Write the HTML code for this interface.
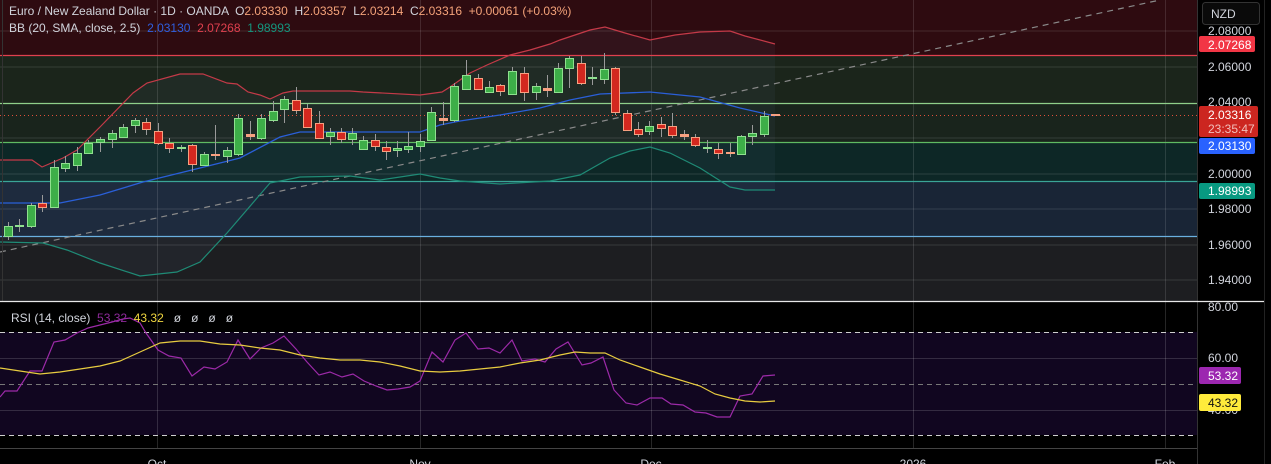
<!DOCTYPE html>
<html><head><meta charset="utf-8"><style>
html,body{margin:0;padding:0;background:#000;width:1271px;height:464px;overflow:hidden;font-family:"Liberation Sans",sans-serif}
svg{display:block}
text{font-family:"Liberation Sans",sans-serif;white-space:pre}
</style></head><body>
<svg width="1271" height="464" viewBox="0 0 1271 464" xmlns="http://www.w3.org/2000/svg" xml:space="preserve">
<rect x="0" y="0" width="1197" height="55" fill="#2e0b10"/>
<rect x="0" y="55" width="1197" height="48" fill="#1b251b"/>
<rect x="0" y="103" width="1197" height="39" fill="#19241c"/>
<rect x="0" y="142" width="1197" height="39" fill="#0d2726"/>
<rect x="0" y="181" width="1197" height="55" fill="#192536"/>
<rect x="0" y="236" width="1197" height="66" fill="#1d1e21"/>
<polygon fill="rgba(120,160,200,0.06)" points="0,160 32,160 42,167 63,158 77,150 100,127 133,93 147,83 180,74 203,74 227,83 237,84 248,92 260,95 270,99 283,93 293,91 350,91 363,92 420,95 442,92 450,87 470,73 487,65 510,55 530,50 550,44 560,40 575,35 590,30 605,27 625,33 650,40 675,35 700,32 730,31 745,36 775,44 775,190 745,190 730,187 700,168 670,153 650,147 630,151 610,158 580,175 550,181 500,184 460,181 440,178 420,174 380,180 350,176 300,177 270,183 227,233 200,262 177,272 140,276 100,263 67,250 43,243 0,242"/>
<g stroke="#ffffff" stroke-opacity="0.12" stroke-width="1">
<line x1="0" y1="31" x2="1197" y2="31"/><line x1="0" y1="67" x2="1197" y2="67"/>
<line x1="0" y1="138" x2="1197" y2="138"/><line x1="0" y1="174" x2="1197" y2="174"/>
<line x1="0" y1="209" x2="1197" y2="209"/><line x1="0" y1="245" x2="1197" y2="245"/>
<line x1="0" y1="280" x2="1197" y2="280"/>
<line x1="157.5" y1="0" x2="157.5" y2="448"/><line x1="420.5" y1="0" x2="420.5" y2="448"/>
<line x1="651.5" y1="0" x2="651.5" y2="448"/><line x1="913.5" y1="0" x2="913.5" y2="448"/>
<line x1="1165.5" y1="0" x2="1165.5" y2="448"/>
</g>
<line x1="0" y1="55.5" x2="1197" y2="55.5" stroke="#e0404e" stroke-width="1.3"/>
<line x1="0" y1="103.5" x2="1197" y2="103.5" stroke="#8fcf8a" stroke-width="1.3"/>
<line x1="0" y1="142.5" x2="1197" y2="142.5" stroke="#5fba62" stroke-width="1.3"/>
<line x1="0" y1="181.5" x2="1197" y2="181.5" stroke="#3aa597" stroke-width="1.3"/>
<line x1="0" y1="236.5" x2="1197" y2="236.5" stroke="#6ab0e0" stroke-width="1.3"/>
<line x1="0" y1="115.5" x2="1197" y2="115.5" stroke="#e0503a" stroke-width="1" stroke-dasharray="1 3"/>
<line x1="0" y1="252" x2="1160" y2="0" stroke="#8a8a8a" stroke-width="1.2" stroke-dasharray="6 5"/>
<polyline fill="none" stroke="#c43a48" stroke-width="1.2" points="0,160 32,160 42,167 63,158 77,150 100,127 133,93 147,83 180,74 203,74 227,83 237,84 248,92 260,95 270,99 283,93 293,91 350,91 363,92 420,95 442,92 450,87 470,73 487,65 510,55 530,50 550,44 560,40 575,35 590,30 605,27 625,33 650,40 675,35 700,32 730,31 745,36 775,44"/>
<polyline fill="none" stroke="#2a5fd8" stroke-width="1.3" points="0,203 60,203 100,195 143,182 200,168 240,158 280,137 300,132 330,132 420,132 440,125 460,121 500,115 540,108 570,100 600,94 650,92 700,97 740,108 775,116"/>
<polyline fill="none" stroke="#1f8b76" stroke-width="1.2" points="0,242 43,243 67,250 100,263 140,276 177,272 200,262 227,233 270,183 300,177 350,176 380,180 420,174 440,178 460,181 500,184 550,181 580,175 610,158 630,151 650,147 670,153 700,168 730,187 745,190 775,190"/>
<g stroke-width="1">
<g stroke="#9a9a9a">
<line x1="8.5" y1="222" x2="8.5" y2="240"/><line x1="19.5" y1="219" x2="19.5" y2="232"/><line x1="31.5" y1="203" x2="31.5" y2="228"/><line x1="42.5" y1="195" x2="42.5" y2="212"/><line x1="54.5" y1="160" x2="54.5" y2="207"/><line x1="65.5" y1="156" x2="65.5" y2="172"/><line x1="77.5" y1="147" x2="77.5" y2="171"/><line x1="88.5" y1="140" x2="88.5" y2="154"/><line x1="100.5" y1="137" x2="100.5" y2="152"/><line x1="112.5" y1="130" x2="112.5" y2="148"/><line x1="123.5" y1="124" x2="123.5" y2="138"/><line x1="135.5" y1="118" x2="135.5" y2="133"/><line x1="146.5" y1="118" x2="146.5" y2="135"/><line x1="158.5" y1="123" x2="158.5" y2="145"/><line x1="169.5" y1="138" x2="169.5" y2="153"/><line x1="181.5" y1="145" x2="181.5" y2="152"/><line x1="192.5" y1="144" x2="192.5" y2="172"/><line x1="204.5" y1="152" x2="204.5" y2="166"/><line x1="215.5" y1="125" x2="215.5" y2="160"/><line x1="227.5" y1="147" x2="227.5" y2="163"/><line x1="238.5" y1="114" x2="238.5" y2="156"/><line x1="250.5" y1="121" x2="250.5" y2="140"/><line x1="261.5" y1="114" x2="261.5" y2="140"/><line x1="273.5" y1="101" x2="273.5" y2="122"/><line x1="284.5" y1="96" x2="284.5" y2="123"/><line x1="296.5" y1="87" x2="296.5" y2="114"/><line x1="307.5" y1="104" x2="307.5" y2="128"/><line x1="319.5" y1="111" x2="319.5" y2="139"/><line x1="330.5" y1="128" x2="330.5" y2="145"/><line x1="341.5" y1="128" x2="341.5" y2="143"/><line x1="352.5" y1="128" x2="352.5" y2="145"/><line x1="363.5" y1="136" x2="363.5" y2="150"/><line x1="375.5" y1="134" x2="375.5" y2="151"/><line x1="386.5" y1="141" x2="386.5" y2="160"/><line x1="397.5" y1="141" x2="397.5" y2="157"/><line x1="408.5" y1="132" x2="408.5" y2="153"/><line x1="420.5" y1="134" x2="420.5" y2="152"/><line x1="431.5" y1="107" x2="431.5" y2="141"/><line x1="443.5" y1="102" x2="443.5" y2="125"/><line x1="454.5" y1="83" x2="454.5" y2="122"/><line x1="466.5" y1="60" x2="466.5" y2="89"/><line x1="478.5" y1="74" x2="478.5" y2="90"/><line x1="489.5" y1="81" x2="489.5" y2="93"/><line x1="500.5" y1="84" x2="500.5" y2="96"/><line x1="512.5" y1="67" x2="512.5" y2="95"/><line x1="524.5" y1="67" x2="524.5" y2="101"/><line x1="536.5" y1="83" x2="536.5" y2="100"/><line x1="547.5" y1="75" x2="547.5" y2="97"/><line x1="558.5" y1="63" x2="558.5" y2="93"/><line x1="569.5" y1="56" x2="569.5" y2="88"/><line x1="581.5" y1="56" x2="581.5" y2="85"/><line x1="592.5" y1="67" x2="592.5" y2="85"/><line x1="604.5" y1="53" x2="604.5" y2="84"/><line x1="615.5" y1="67" x2="615.5" y2="115"/><line x1="627.5" y1="110" x2="627.5" y2="131"/><line x1="638.5" y1="122" x2="638.5" y2="137"/><line x1="649.5" y1="121" x2="649.5" y2="135"/><line x1="661.5" y1="117" x2="661.5" y2="137"/><line x1="672.5" y1="113" x2="672.5" y2="138"/><line x1="684.5" y1="130" x2="684.5" y2="140"/><line x1="695.5" y1="134" x2="695.5" y2="147"/><line x1="707.5" y1="140" x2="707.5" y2="153"/><line x1="718.5" y1="143" x2="718.5" y2="159"/><line x1="730.5" y1="143" x2="730.5" y2="157"/><line x1="741.5" y1="135" x2="741.5" y2="155"/><line x1="752.5" y1="125" x2="752.5" y2="145"/><line x1="764.5" y1="111" x2="764.5" y2="137"/>
</g>
<g fill="#3dae48" stroke="#8fe08f">
<rect x="4.5" y="226.5" width="8" height="10"/><rect x="15.5" y="225.5" width="8" height="1"/><rect x="27.5" y="205.5" width="8" height="21"/><rect x="50.5" y="167.5" width="8" height="40"/><rect x="61.5" y="163.5" width="8" height="5"/><rect x="73.5" y="153.5" width="8" height="12"/><rect x="84.5" y="143.5" width="8" height="10"/><rect x="96.5" y="139.5" width="8" height="3"/><rect x="108.5" y="133.5" width="8" height="6"/><rect x="119.5" y="127.5" width="8" height="10"/><rect x="131.5" y="120.5" width="8" height="5"/><rect x="177.5" y="147.5" width="8" height="1"/><rect x="200.5" y="154.5" width="8" height="11"/><rect x="223.5" y="150.5" width="8" height="6"/><rect x="234.5" y="118.5" width="8" height="36"/><rect x="257.5" y="118.5" width="8" height="20"/><rect x="269.5" y="111.5" width="8" height="9"/><rect x="280.5" y="99.5" width="8" height="10"/><rect x="326.5" y="132.5" width="8" height="4"/><rect x="348.5" y="133.5" width="8" height="6"/><rect x="359.5" y="140.5" width="8" height="9"/><rect x="393.5" y="148.5" width="8" height="2"/><rect x="404.5" y="146.5" width="8" height="3"/><rect x="416.5" y="141.5" width="8" height="5"/><rect x="427.5" y="112.5" width="8" height="28"/><rect x="450.5" y="86.5" width="8" height="34"/><rect x="462.5" y="75.5" width="8" height="14"/><rect x="485.5" y="87.5" width="8" height="5"/><rect x="508.5" y="71.5" width="8" height="23"/><rect x="532.5" y="86.5" width="8" height="6"/><rect x="554.5" y="68.5" width="8" height="24"/><rect x="565.5" y="58.5" width="8" height="10"/><rect x="588.5" y="77.5" width="8" height="1"/><rect x="600.5" y="69.5" width="8" height="10"/><rect x="645.5" y="126.5" width="8" height="5"/><rect x="703.5" y="147.5" width="8" height="1"/><rect x="737.5" y="136.5" width="8" height="18"/><rect x="748.5" y="133.5" width="8" height="3"/><rect x="760.5" y="116.5" width="8" height="18"/>
</g>
<g fill="#d3281f" stroke="#f7a080">
<rect x="38.5" y="203.5" width="8" height="4"/><rect x="142.5" y="122.5" width="8" height="7"/><rect x="154.5" y="131.5" width="8" height="12"/><rect x="165.5" y="143.5" width="8" height="5"/><rect x="188.5" y="145.5" width="8" height="19"/><rect x="292.5" y="100.5" width="8" height="10"/><rect x="303.5" y="108.5" width="8" height="19"/><rect x="315.5" y="123.5" width="8" height="15"/><rect x="337.5" y="132.5" width="8" height="7"/><rect x="371.5" y="140.5" width="8" height="6"/><rect x="382.5" y="147.5" width="8" height="4"/><rect x="474.5" y="78.5" width="8" height="11"/><rect x="496.5" y="85.5" width="8" height="6"/><rect x="520.5" y="73.5" width="8" height="19"/><rect x="577.5" y="63.5" width="8" height="20"/><rect x="611.5" y="68.5" width="8" height="44"/><rect x="623.5" y="113.5" width="8" height="17"/><rect x="634.5" y="129.5" width="8" height="5"/><rect x="657.5" y="124.5" width="8" height="4"/><rect x="668.5" y="126.5" width="8" height="9"/><rect x="691.5" y="137.5" width="8" height="8"/><rect x="714.5" y="149.5" width="8" height="4"/>
</g>
<g fill="#f7a080" stroke="#f7a080">
<rect x="211.5" y="154.5" width="8" height="1"/><rect x="246.5" y="134.5" width="8" height="2"/><rect x="439.5" y="118.5" width="8" height="2"/><rect x="543.5" y="88.5" width="8" height="2"/><rect x="680.5" y="134.5" width="8" height="2"/><rect x="726.5" y="152.5" width="8" height="1"/><rect x="771.5" y="114.5" width="8" height="1"/>
</g>
</g>
<line x1="2.5" y1="0" x2="2.5" y2="448" stroke="#333" stroke-width="1"/>
<text x="9" y="15" font-size="12" fill="#d1d4dc">Euro / New Zealand Dollar · 1D · OANDA  O<tspan fill="#f5a37a">2.03330</tspan>  H<tspan fill="#f5a37a">2.03357</tspan>  L<tspan fill="#f5a37a">2.03214</tspan>  C<tspan fill="#f5a37a">2.03316  +0.00061 (+0.03%)</tspan></text>
<text x="9" y="32" font-size="12" fill="#d1d4dc">BB (20, SMA, close, 2.5)  <tspan fill="#2f5fe0">2.03130</tspan>  <tspan fill="#e0404e">2.07268</tspan>  <tspan fill="#14977f">1.98993</tspan></text>
<rect x="0" y="302" width="1197" height="146" fill="#000"/>
<line x1="0" y1="301.5" x2="1264" y2="301.5" stroke="#e8e8e8" stroke-width="1.3"/>
<rect x="0" y="332" width="1197" height="103" fill="#110620"/>
<g stroke="#ffffff" stroke-opacity="0.15">
<line x1="0" y1="358.5" x2="1197" y2="358.5"/><line x1="0" y1="410.5" x2="1197" y2="410.5"/>
<line x1="157.5" y1="302" x2="157.5" y2="448"/><line x1="420.5" y1="302" x2="420.5" y2="448"/><line x1="651.5" y1="302" x2="651.5" y2="448"/><line x1="913.5" y1="302" x2="913.5" y2="448"/><line x1="1165.5" y1="302" x2="1165.5" y2="448"/>
</g>
<g stroke="#cfcfcf" stroke-dasharray="5 4" stroke-width="1">
<line x1="0" y1="332.5" x2="1197" y2="332.5"/><line x1="0" y1="435.5" x2="1197" y2="435.5"/>
</g>
<line x1="0" y1="384.5" x2="1197" y2="384.5" stroke="#777" stroke-dasharray="5 4"/>
<polyline fill="none" stroke="#9c2aa8" stroke-width="1.2" points="0,397 5,391 17,391 30,371 42,371 54,342 65,340 77,333 88,328 100,325 112,322 123,319 130,318 140,323 146,333 158,350 169,356 181,358 192,376 204,367 215,369 227,362 238,340 250,359 261,348 273,343 284,336 296,349 307,362 319,375 330,372 342,377 353,374 364,381 376,386 387,390 398,389 410,387 420,381 432,352 443,362 455,340 466,333 478,349 489,348 500,353 512,340 522,361 535,359 545,362 556,349 568,342 582,365 591,363 603,357 614,390 626,403 637,405 650,398 662,398 671,404 683,405 695,412 706,413 717,417 730,417 740,396 752,394 763,376 775,375"/>
<polyline fill="none" stroke="#e8cc40" stroke-width="1.2" points="0,368 20,371 40,374 60,372 80,369 100,366 120,361 140,352 160,343 180,341 200,341 220,344 240,345 260,348 280,350 300,355 320,358 340,360 360,360 380,362 400,366 420,371 440,372 460,371 480,369 500,367 520,363 540,360 560,355 575,352 590,353 605,353 620,360 640,367 660,374 680,380 700,386 715,394 730,398 745,401 760,402 775,401"/>
<text x="11" y="322" font-size="12" fill="#d1d4dc">RSI (14, close)  <tspan fill="#8e2a9a">53.32</tspan>  <tspan fill="#f0d640">43.32</tspan>   ø   ø   ø   ø</text>
<rect x="0" y="448" width="1197" height="16" fill="#000"/>
<line x1="0" y1="448.5" x2="1197" y2="448.5" stroke="#444"/>
<g font-size="12" fill="#d1d4dc" text-anchor="middle">
<text x="157" y="468">Oct</text><text x="420" y="468">Nov</text><text x="651" y="468">Dec</text><text x="913" y="468">2026</text><text x="1165" y="468">Feb</text>
</g>
<rect x="1197" y="0" width="74" height="464" fill="#000"/>
<line x1="1197.5" y1="0" x2="1197.5" y2="464" stroke="#333"/>
<line x1="1264.5" y1="0" x2="1264.5" y2="464" stroke="#222"/>
<line x1="1197" y1="301.5" x2="1264" y2="301.5" stroke="#e8e8e8" stroke-width="1.3"/>
<rect x="1202.5" y="2.5" width="57" height="22" rx="3" fill="#0a0a0a" stroke="#333"/>
<text x="1211" y="18" font-size="12" fill="#d1d4dc">NZD</text>
<g font-size="12" fill="#d1d4dc">
<text x="1208" y="35">2.08000</text>
<text x="1208" y="71">2.06000</text>
<text x="1208" y="106">2.04000</text>
<text x="1208" y="178">2.00000</text>
<text x="1208" y="213">1.98000</text>
<text x="1208" y="249">1.96000</text>
<text x="1208" y="284">1.94000</text>
<text x="1208" y="311">80.00</text>
<text x="1208" y="362">60.00</text>
<text x="1208" y="414">40.00</text>
</g>
<rect x="1199" y="36" width="56" height="16" rx="2" fill="#f23645"/>
<text x="1208" y="49" font-size="12" fill="#fff">2.07268</text>
<rect x="1199" y="106" width="59" height="31" rx="2" fill="#cc2620"/>
<text x="1208" y="119" font-size="12" fill="#fff">2.03316</text>
<text x="1208" y="133" font-size="12" fill="#f2c0bb">23:35:47</text>
<rect x="1199" y="138" width="56" height="16" rx="2" fill="#2962ff"/>
<text x="1208" y="150" font-size="12" fill="#fff">2.03130</text>
<rect x="1199" y="183" width="56" height="16" rx="2" fill="#089981"/>
<text x="1208" y="195" font-size="12" fill="#fff">1.98993</text>
<rect x="1199" y="367" width="42" height="17" rx="2" fill="#9c27b0"/>
<text x="1208" y="380" font-size="12" fill="#fff">53.32</text>
<rect x="1199" y="394" width="42" height="17" rx="2" fill="#ffeb3b"/>
<text x="1208" y="407" font-size="12" fill="#111">43.32</text>
</svg>
</body></html>
